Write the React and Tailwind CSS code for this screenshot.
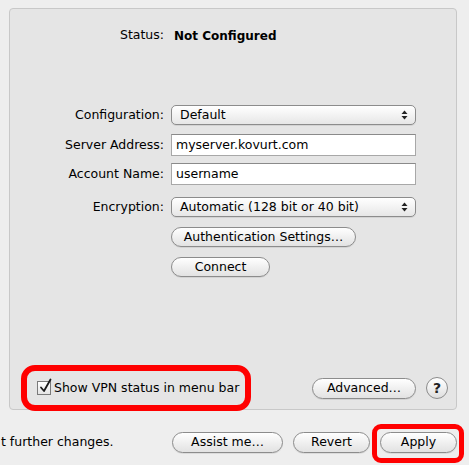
import React from "react";

const font = { fontFamily: '"DejaVu Sans", "Lucida Grande", sans-serif' };

function Pill({ className = "", children }) {
  return (
    <div
      className={
        "flex items-center justify-center rounded-full border border-[#8c8c8c] bg-gradient-to-b from-[#ffffff] via-[#f0f0f0] to-[#e2e2e2] text-[12.5px] text-black shadow-[0_1px_0_rgba(0,0,0,0.08)] " +
        className
      }
    >
      {children}
    </div>
  );
}

function Popup({ children }) {
  return (
    <div className="flex h-[20px] w-[245px] items-center justify-between rounded-[5px] border border-[#8c8c8c] bg-gradient-to-b from-[#ffffff] via-[#f3f3f3] to-[#e6e6e6] pl-[8px] pr-[7px] text-[12.5px] text-black shadow-[0_1px_0_rgba(0,0,0,0.08)]">
      <span>{children}</span>
      <svg width="7" height="10" viewBox="0 0 7 10">
        <path d="M3.5 0.5 L6.5 4 L0.5 4 Z" fill="#222" />
        <path d="M3.5 9.5 L6.5 6 L0.5 6 Z" fill="#222" />
      </svg>
    </div>
  );
}

function Field({ children }) {
  return (
    <div className="flex h-[22px] w-[245px] items-center border border-[#a8a8a8] border-t-[#8a8a8a] bg-white pl-[4px] text-[12.5px] text-black">
      {children}
    </div>
  );
}

function Row({ label, className = "", children }) {
  return (
    <div className={"flex items-center " + className}>
      <div className="w-[154px] text-right text-[12.5px] text-black">{label}</div>
      <div className="ml-[7px]">{children}</div>
    </div>
  );
}

export default function App() {
  return (
    <div
      className="relative h-[465px] w-[469px] overflow-hidden bg-[#eeeeee] pl-[9px] pt-[8px]"
      style={font}
    >
      <div className="flex h-[402px] w-[448px] flex-col rounded-[4px] border border-[#c8c8c8] bg-[#e5e5e5]">
        <Row label="Status:" className="mt-[16px] h-[20px]">
          <span className="ml-[3px] text-[12px] font-bold text-black">Not Configured</span>
        </Row>
        <Row label="Configuration:" className="mt-[60px] h-[20px]">
          <Popup>Default</Popup>
        </Row>
        <Row label="Server Address:" className="mt-[9px] h-[22px]">
          <Field>myserver.kovurt.com</Field>
        </Row>
        <Row label="Account Name:" className="mt-[7px] h-[22px]">
          <Field>username</Field>
        </Row>
        <Row label="Encryption:" className="mt-[12px] h-[20px]">
          <Popup>Automatic (128 bit or 40 bit)</Popup>
        </Row>
        <Row label="" className="mt-[10px] h-[20px]">
          <Pill className="h-[20px] w-[185px]">Authentication Settings…</Pill>
        </Row>
        <Row label="" className="mt-[10px] h-[20px]">
          <Pill className="h-[20px] w-[99px]">Connect</Pill>
        </Row>
        <div className="flex-1" />
        <div className="mb-[10px] flex h-[22px] items-center">
          <div className="ml-[27px] flex items-center">
            <div className="relative h-[14px] w-[14px] border border-[#7a7a7a] bg-gradient-to-b from-[#ffffff] to-[#e4e4e4]">
              <svg
                className="absolute left-[1px] top-[-4px]"
                width="13"
                height="16"
                viewBox="0 0 13 16"
              >
                <path
                  d="M2 9.5 L5 13 L11.5 1.5"
                  fill="none"
                  stroke="#1a1a1a"
                  strokeWidth="1.8"
                  strokeLinecap="round"
                  strokeLinejoin="round"
                />
              </svg>
            </div>
            <span className="ml-[3px] text-[12.5px] text-black">
              Show VPN status in menu bar
            </span>
          </div>
          <div className="flex-1" />
          <Pill className="h-[21px] w-[104px]">Advanced…</Pill>
          <div className="ml-[10px] mr-[8px] flex h-[22px] w-[22px] items-center justify-center rounded-full border border-[#8c8c8c] bg-gradient-to-b from-[#ffffff] via-[#f0f0f0] to-[#dedede] text-[14px] font-bold text-[#222]">
            ?
          </div>
        </div>
      </div>

      <div className="mt-[22px] flex h-[21px] items-center">
        <span className="ml-[-8px] text-[12.5px] text-black">t further changes.</span>
        <div className="flex-1" />
        <Pill className="h-[21px] w-[111px]">Assist me…</Pill>
        <Pill className="ml-[10px] h-[21px] w-[77px]">Revert</Pill>
        <Pill className="ml-[10px] mr-[12px] h-[21px] w-[77px]">Apply</Pill>
      </div>

      <div className="pointer-events-none absolute left-[21px] top-[365px] h-[46px] w-[230px] rounded-[14px] border-[6px] border-[#ff0000]" />
      <div className="pointer-events-none absolute left-[372px] top-[424px] h-[39px] w-[92px] rounded-[9px] border-[5px] border-[#ff0000]" />
    </div>
  );
}
